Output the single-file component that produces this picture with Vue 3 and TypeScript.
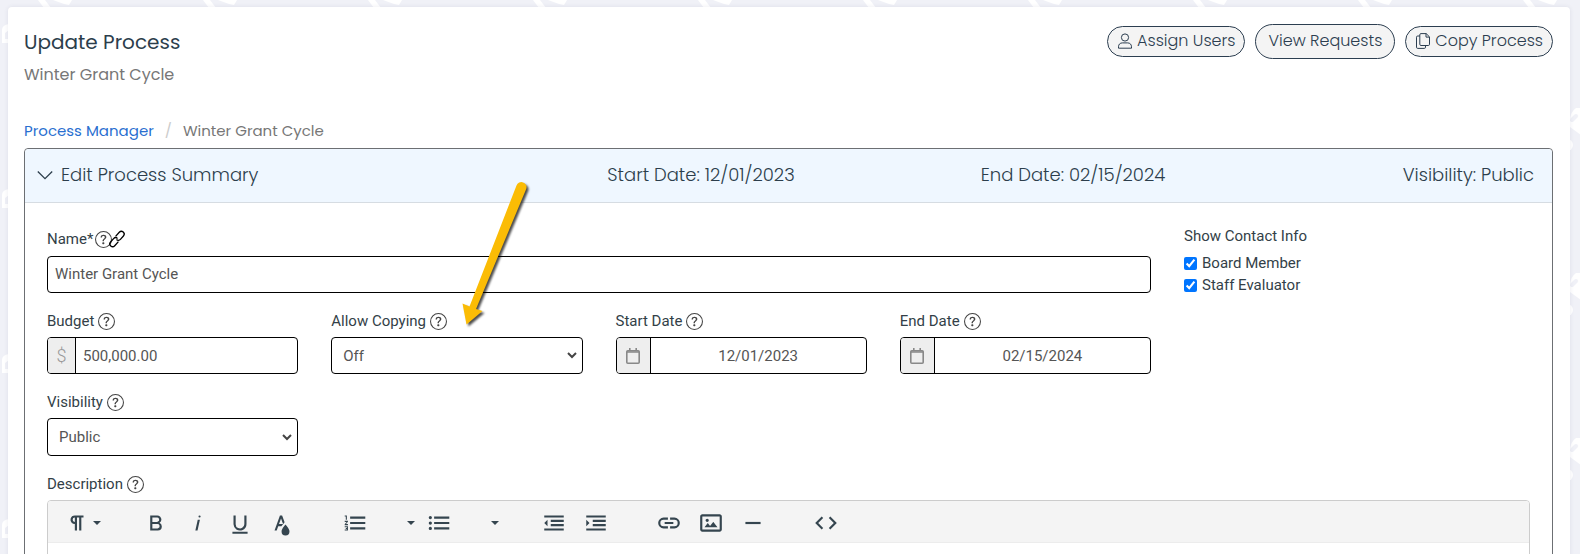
<script setup lang="ts">
import { ref } from 'vue'

interface Tool {
  label: string
  path: string
  caret?: 'near' | 'far'
}

const name = ref('Winter Grant Cycle')
const budget = ref('500,000.00')
const copying = ref('Off')
const startDate = ref('12/01/2023')
const endDate = ref('02/15/2024')
const visibility = ref('Public')

const contacts = ref([
  { id: 'board', label: 'Board Member', checked: true },
  { id: 'staff', label: 'Staff Evaluator', checked: true },
])

const helpPath =
  'M8 15A7 7 0 1 1 8 1a7 7 0 0 1 0 14m0 1A8 8 0 1 0 8 0a8 8 0 0 0 0 16M5.255 5.786a.237.237 0 0 0 .241.247h.825c.138 0 .248-.113.266-.25.09-.656.54-1.134 1.342-1.134.686 0 1.314.343 1.314 1.168 0 .635-.374.927-.965 1.371-.673.489-1.206 1.06-1.168 1.987l.003.217a.25.25 0 0 0 .25.246h.811a.25.25 0 0 0 .25-.25v-.105c0-.718.273-.927 1.01-1.486.609-.463 1.244-.977 1.244-2.056 0-1.511-1.276-2.241-2.673-2.241-1.267 0-2.655.59-2.75 2.286m1.557 5.763c0 .533.425.927 1.01.927.609 0 1.028-.394 1.028-.927 0-.552-.42-.94-1.029-.94-.584 0-1.009.388-1.009.94'

const toolGroups: Tool[][] = [
  [
    {
      label: 'Paragraph format',
      caret: 'near',
      path: 'M10.15,5A4.11,4.11,0,0,0,6.08,8.18,4,4,0,0,0,10,13v6h2V7h2V19h2V7h2V5ZM8,9a2,2,0,0,1,2-2v4A2,2,0,0,1,8,9Z',
    },
  ],
  [
    {
      label: 'Bold',
      path: 'M15.25,11.8h0A3.68,3.68,0,0,0,17,9a3.93,3.93,0,0,0-3.86-4H6.65V19h7a3.74,3.74,0,0,0,3.7-3.78V15.1A3.64,3.64,0,0,0,15.25,11.8ZM8.65,7h4.2a2.09,2.09,0,0,1,2,1.3,2.09,2.09,0,0,1-1.37,2.61,2.23,2.23,0,0,1-.63.09H8.65Zm4.6,10H8.65V13h4.6a2.09,2.09,0,0,1,2,1.3,2.09,2.09,0,0,1-1.37,2.61A2.23,2.23,0,0,1,13.25,17Z',
    },
    { label: 'Italic', path: 'M11.76,9h2l-2.2,10h-2Zm1.68-4a1,1,0,1,0,1,1,1,1,0,0,0-1-1Z' },
    {
      label: 'Underline',
      path: 'M19,20v2H5V20Zm-3-6.785a4,4,0,0,1-5.74,3.4A3.75,3.75,0,0,1,8,13.085V5.005H6v8.21a6,6,0,0,0,8,5.44,5.851,5.851,0,0,0,4-5.65v-8H16Z',
    },
    {
      label: 'Text color',
      path: 'M15.2,13.494s-3.6,3.9-3.6,6.3a3.65,3.65,0,0,0,7.3.1v-.1C18.9,17.394,15.2,13.494,15.2,13.494Zm-1.47-1.357.669-.724L12.1,5h-2l-5,14h2l1.43-4h2.943A24.426,24.426,0,0,1,13.726,12.137ZM11.1,7.8l1.86,5.2H9.244Z',
    },
  ],
  [
    {
      label: 'Ordered list',
      caret: 'far',
      path: 'M2.5,16h2v.5h-1v1h1V18h-2v1h3V15h-3Zm1-7h1V5h-2V6h1Zm-1,2H4.3L2.5,13.1V14h3V13H3.7l1.8-2.1V10h-3Zm5-5V8h14V6Zm0,12h14V16H7.5Zm0-5h14V11H7.5Z',
    },
    {
      label: 'Unordered list',
      caret: 'far',
      path: 'M4,10.5a1.5,1.5,0,1,0,0,3a1.5,1.5,0,1,0,0-3ZM4,5.5a1.5,1.5,0,1,0,0,3a1.5,1.5,0,1,0,0-3ZM4,15.5a1.5,1.5,0,1,0,0,3a1.5,1.5,0,1,0,0-3ZM7.5,6V8h14V6Zm0,12h14V16H7.5Zm0-5h14V11H7.5Z',
    },
  ],
  [
    { label: 'Decrease indent', path: 'M3,12l3,3V9ZM3,19H21V17H3ZM3,7H21V5H3Zm6,4H21V9H9Zm0,4H21V13H9Z' },
    { label: 'Increase indent', path: 'M3,9v6l3-3ZM3,19H21V17H3ZM3,7H21V5H3Zm6,4H21V9H9Zm0,4H21V13H9Z' },
  ],
  [
    {
      label: 'Insert link',
      path: 'M11,17H7A5,5,0,0,1,7,7h4V9H7a3,3,0,0,0,0,6h4ZM17,7H13V9h4a3,3,0,0,1,0,6H13v2h4A5,5,0,0,0,17,7Zm-1,4H8v2h8Z',
    },
    {
      label: 'Insert image',
      path: 'M14.2,11l3.8,5H6l3-3.9l2.1,2.7L14,11H14.2z M8.5,11c0.8,0,1.5-0.7,1.5-1.5S9.3,8,8.5,8S7,8.7,7,9.5C7,10.3,7.7,11,8.5,11z M22,6v12c0,1.1-0.9,2-2,2H4c-1.1,0-2-0.9-2-2V6c0-1.1,0.9-2,2-2h16C21.1,4,22,4.9,22,6z M20,8.8V6H4v12h16V8.8z',
    },
    { label: 'Insert horizontal line', path: 'M5,11h14v2H5Z' },
  ],
  [
    {
      label: 'Code view',
      path: 'M9.4,16.6,4.8,12,9.4,7.4,8,6,2,12l6,6Zm5.2,0L19.2,12,14.6,7.4,16,6l6,6-6,6Z',
    },
  ],
]
</script>

<template>
  <div class="page">
    <svg class="watermark" aria-hidden="true">
      <defs>
        <pattern id="marks" width="165" height="165" patternUnits="userSpaceOnUse">
          <path d="M38 0h7l6 8h-7zM53 0h19l-3 5-5-1z" fill="#fff" />
          <path d="M9 24q-7 1-7 6v13h7v-4H5v-6l4-3z" fill="#fff" />
          <path d="M85 120q1-9 6-12h5v27l-11-8z" fill="#fff" />
          <path d="M87 120l4-4" fill="none" stroke="#f0f1f7" stroke-width="4" stroke-linecap="round" />
          <circle cx="82" cy="145" r="6" fill="#fff" />
        </pattern>
      </defs>
      <rect width="100%" height="100%" fill="url(#marks)" />
    </svg>

    <main class="card">
      <header class="top">
        <div>
          <h1>Update Process</h1>
          <p class="subtitle">Winter Grant Cycle</p>
        </div>
        <div class="actions">
          <button type="button" class="pill">
            <svg width="16" height="16" viewBox="0 0 16 16" class="line">
              <circle cx="8" cy="4.5" r="3.6" />
              <path d="M1.5 15.2v-1.4c0-2.4 1.6-3.9 3.8-3.9h5.4c2.2 0 3.8 1.5 3.8 3.9v1.4z" />
            </svg>
            Assign Users
          </button>
          <button type="button" class="pill tall">View Requests</button>
          <button type="button" class="pill">
            <svg width="16" height="16" viewBox="0 0 16 16" class="line">
              <path d="M6 .6h5.2l3.3 3.300v7.400a1.200 1.200 0 0 1-1.200 1.200H6a1.200 1.200 0 0 1-1.200-1.200V1.800A1.200 1.200 0 0 1 6 .6zM11 .6v3.500h3.500M4.800 3H2.700a1.200 1.200 0 0 0-1.200 1.200v10a1.200 1.200 0 0 0 1.200 1.200h6.600a1.200 1.200 0 0 0 1.200-1.200v-1.700" />
            </svg>
            Copy Process
          </button>
        </div>
      </header>

      <nav class="crumbs" aria-label="Breadcrumb">
        <a href="#">Process Manager</a>
        <span class="slash">/</span>
        <span>Winter Grant Cycle</span>
      </nav>

      <section class="panel">
        <div class="summary">
          <button type="button" class="toggle">
            <svg width="16" height="16" viewBox="0 0 16 16" class="line chevron">
              <path d="M.8 4.500 8 11.700l7.200-7.200" />
            </svg>
            Edit Process Summary
          </button>
          <span class="mid">Start Date: 12/01/2023</span>
          <span class="mid">End Date: 02/15/2024</span>
          <span class="end">Visibility: Public</span>
        </div>

        <form class="body" @submit.prevent>
          <div class="fields">
            <div class="field wide">
              <div class="label tight">
                <label for="name">Name*</label>
                <svg class="help" viewBox="0 0 16 16"><path :d="helpPath" /></svg>
                <svg class="chain" viewBox="0 0 16 16">
                  <g transform="rotate(-48 8 8)">
                    <path d="M7 10.800H1.500a2.800 2.800 0 0 1 0-5.600H6a2.800 2.800 0 0 1 2.800 2.800" />
                    <path d="M9 5.200h5.500a2.800 2.800 0 0 1 0 5.600H10A2.800 2.800 0 0 1 7.200 8" />
                  </g>
                </svg>
              </div>
              <input id="name" v-model="name" type="text" class="control" />
            </div>

            <div class="field">
              <div class="label">
                <label for="budget">Budget</label>
                <svg class="help" viewBox="0 0 16 16"><path :d="helpPath" /></svg>
              </div>
              <div class="group">
                <span class="addon money">$</span>
                <input id="budget" v-model="budget" type="text" />
              </div>
            </div>

            <div class="field">
              <div class="label">
                <label for="copying">Allow Copying</label>
                <svg class="help" viewBox="0 0 16 16"><path :d="helpPath" /></svg>
              </div>
              <select id="copying" v-model="copying" class="control">
                <option>Off</option>
                <option>On</option>
              </select>
            </div>

            <div class="field">
              <div class="label">
                <label for="start">Start Date</label>
                <svg class="help" viewBox="0 0 16 16"><path :d="helpPath" /></svg>
              </div>
              <div class="group">
                <span class="addon">
                  <svg width="14" height="16" viewBox="0 0 14 16" class="calendar">
                    <rect x=".8" y="2.800" width="12.400" height="12.400" rx="1" />
                    <path d="M3.800 0v3M10.200 0v3M1 4h12" />
                  </svg>
                </span>
                <input id="start" v-model="startDate" type="text" class="date" />
              </div>
            </div>

            <div class="field">
              <div class="label">
                <label for="end">End Date</label>
                <svg class="help" viewBox="0 0 16 16"><path :d="helpPath" /></svg>
              </div>
              <div class="group">
                <span class="addon">
                  <svg width="14" height="16" viewBox="0 0 14 16" class="calendar">
                    <rect x=".8" y="2.800" width="12.400" height="12.400" rx="1" />
                    <path d="M3.800 0v3M10.200 0v3M1 4h12" />
                  </svg>
                </span>
                <input id="end" v-model="endDate" type="text" class="date" />
              </div>
            </div>

            <div class="field">
              <div class="label">
                <label for="visibility">Visibility</label>
                <svg class="help" viewBox="0 0 16 16"><path :d="helpPath" /></svg>
              </div>
              <select id="visibility" v-model="visibility" class="control roomy">
                <option>Public</option>
                <option>Private</option>
              </select>
            </div>
          </div>

          <fieldset class="contacts">
            <legend>Show Contact Info</legend>
            <label v-for="c in contacts" :key="c.id" :for="c.id">
              <input :id="c.id" v-model="c.checked" type="checkbox" />
              {{ c.label }}
            </label>
          </fieldset>

          <div class="description">
            <div class="label">
              <label for="description">Description</label>
              <svg class="help" viewBox="0 0 16 16"><path :d="helpPath" /></svg>
            </div>
            <div class="editor">
              <div class="toolbar" role="toolbar" aria-label="Formatting">
                <div v-for="(group, i) in toolGroups" :key="i" class="tools">
                  <button
                    v-for="tool in group"
                    :key="tool.label"
                    type="button"
                    class="tool"
                    :class="tool.caret"
                    :aria-label="tool.label"
                  >
                    <svg width="26" height="26" viewBox="0 0 24 24"><path :d="tool.path" /></svg>
                    <i v-if="tool.caret" class="caret"></i>
                  </button>
                </div>
              </div>
              <textarea id="description" rows="8"></textarea>
            </div>
          </div>
        </form>
      </section>
    </main>

    <svg class="arrow" width="90" height="160" viewBox="0 0 90 160" aria-hidden="true">
      <path d="M66.500 7.500a5 5 0 0 1 9.700 3.500L26 131l6.500 2-16 13.500L12.500 125.500l7 3z" />
    </svg>
  </div>
</template>

<style>
body {
  background: #f0f1f7;
}
</style>

<style scoped>
.page {
  position: relative;
  height: 100vh;
  overflow: hidden;
  box-sizing: border-box;
  padding: 7px 10px 0 8px;
  font-family: Roboto, "Liberation Sans", sans-serif;
  font-size: 15px;
  color: #333f48;
}
.page *,
.page *::before {
  box-sizing: border-box;
}
.watermark {
  position: absolute;
  top: 0;
  left: 0;
  width: 100%;
  height: 100%;
}
.card {
  position: relative;
  min-height: 100%;
  padding: 17px 17px 0 16px;
  border-radius: 4px;
  background: #fff;
  box-shadow: 0 0 4px rgba(60, 70, 100, 0.1);
}
.top,
.crumbs,
.summary {
  font-family: Poppins, Inter, "Open Sans", sans-serif;
  font-weight: 300;
}
.top {
  display: flex;
  justify-content: space-between;
  align-items: flex-start;
  height: 94px;
}
h1 {
  margin: 0;
  font-size: 20px;
  line-height: 36px;
  font-weight: 400;
  color: #2c3e4c;
}
.subtitle {
  margin: 2px 0 0;
  font-size: 16px;
  line-height: 26px;
  font-weight: 400;
  color: #777;
}
.actions {
  display: flex;
  align-items: center;
  gap: 10px;
}
.pill {
  display: flex;
  align-items: center;
  gap: 4px;
  height: 31px;
  padding: 0 9px 2px;
  border: 1px solid #2c3e50;
  border-radius: 18px;
  background: #f4f4f4;
  color: #2c3e50;
  font: inherit;
  font-size: 16px;
}
.pill.tall {
  height: 35px;
  padding: 0 12px 2px;
}
.line {
  flex: none;
  fill: none;
  stroke: currentColor;
  stroke-width: 1;
}
.chevron {
  stroke-width: 1.3;
}
.crumbs {
  display: flex;
  gap: 11px;
  height: 30px;
  line-height: 26px;
  font-size: 15px;
  font-weight: 400;
  color: #777;
}
.crumbs a {
  color: #2a6fd0;
  text-decoration: none;
}
.slash {
  color: #ccc;
}
.panel {
  border: 1px solid #6c6f73;
  border-radius: 4px;
}
.summary {
  display: grid;
  grid-template-columns: 478fr 372fr 372fr 275fr;
  align-items: center;
  height: 54px;
  padding: 0 18px 2px 12px;
  border-bottom: 1px solid #d6dce2;
  border-radius: 4px 4px 0 0;
  background: #eff7ff;
  font-size: 18px;
  color: #2c3e4c;
}
.toggle {
  display: flex;
  align-items: center;
  gap: 8px;
  padding: 0;
  border: 0;
  background: none;
  color: inherit;
  font: inherit;
}
.mid {
  text-align: center;
}
.end {
  text-align: right;
}
.body {
  display: grid;
  grid-template-columns: repeat(4, minmax(0, 1fr));
  column-gap: 33px;
  row-gap: 17px;
  padding: 26px 22px 20px;
}
.fields {
  grid-column: span 3;
  display: grid;
  grid-template-columns: repeat(4, minmax(0, 1fr));
  column-gap: 33px;
  row-gap: 17px;
}
.wide,
.description {
  grid-column: 1 / -1;
}
.label {
  display: flex;
  align-items: center;
  gap: 4px;
  height: 22px;
  margin-bottom: 5px;
}
.label.tight {
  gap: 2px;
  padding-bottom: 2px;
}
.help {
  width: 17px;
  height: 17px;
  fill: #444;
}
.chain {
  width: 16px;
  height: 16px;
  margin-left: -5px;
  overflow: visible;
  fill: none;
  stroke: #000;
  stroke-width: 1.3;
}
.control,
.group {
  width: 100%;
  height: 37px;
  border: 1px solid #000;
  border-radius: 4px;
  background: #fff;
  color: #555;
  font: inherit;
}
.control {
  display: block;
  padding: 0 7px 2px;
}
select.control {
  appearance: none;
  padding: 0 11px;
  background: #fff
    url("data:image/svg+xml,%3Csvg xmlns='http://www.w3.org/2000/svg' width='10' height='7'%3E%3Cpath d='M1 1l4 4 4-4' fill='none' stroke='%23444' stroke-width='2'/%3E%3C/svg%3E")
    no-repeat right 5px center;
}
.control.roomy {
  height: 38px;
}
.group {
  display: flex;
  overflow: hidden;
}
.group input {
  flex: 1;
  min-width: 0;
  padding: 0 7px;
  border: 0;
  background: none;
  color: inherit;
  font: inherit;
}
.group .date {
  text-align: center;
}
.addon {
  display: flex;
  align-items: center;
  justify-content: center;
  width: 34px;
  border-right: 1px solid #000;
  background: #eee;
  color: #999;
}
.addon.money {
  width: 28px;
  font-size: 18px;
  font-weight: 300;
}
.calendar {
  fill: none;
  stroke: #888;
  stroke-width: 1.6;
}
.contacts {
  margin: 0;
  padding: 0;
  border: 0;
}
.contacts legend {
  padding: 0;
  margin-bottom: 9px;
  line-height: 14px;
}
.contacts label {
  display: flex;
  align-items: center;
  gap: 5px;
  height: 22px;
}
.contacts input {
  width: 13px;
  height: 13px;
  margin: 0;
}
.editor {
  border: 1px solid #ccc;
  border-radius: 4px;
  overflow: hidden;
}
.toolbar {
  display: flex;
  align-items: center;
  gap: 31px;
  height: 42px;
  padding: 2px 10px 0;
  background: #f4f4f4;
  border-bottom: 1px solid #ececec;
}
.tools {
  display: flex;
}
.tool {
  display: flex;
  align-items: center;
  justify-content: center;
  width: 42px;
  height: 38px;
  padding: 0;
  border: 0;
  background: none;
}
.tool svg {
  fill: #35454f;
}
.tool.near {
  width: 46px;
  padding-left: 2px;
  gap: 3px;
}
.tool.far {
  width: 84px;
  padding: 0 3px 0 8px;
  justify-content: space-between;
}
.caret {
  border: 4px solid transparent;
  border-top-color: #35454f;
  border-bottom: 0;
}
textarea {
  display: block;
  width: 100%;
  border: 0;
  resize: none;
  font: inherit;
}
.arrow {
  position: absolute;
  left: 450px;
  top: 178px;
  fill: #fbbc05;
  filter: drop-shadow(2px 2px 1px rgba(0, 0, 0, 0.7));
  pointer-events: none;
}
</style>
